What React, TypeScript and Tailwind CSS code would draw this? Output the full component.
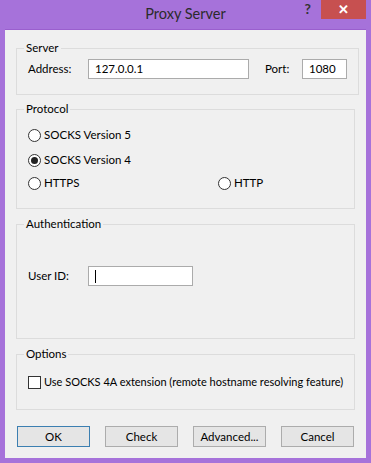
import React from "react";

function Radio({ checked, label }: { checked?: boolean; label: string }) {
  return (
    <div className="flex items-center gap-[3px] h-[16px]">
      <span className="w-[13px] h-[13px] rounded-full border border-[#333] bg-white flex items-center justify-center">
        {checked && <span className="w-[7px] h-[7px] rounded-full bg-[#222]" />}
      </span>
      <span>{label}</span>
    </div>
  );
}

function Btn({ label, focused }: { label: string; focused?: boolean }) {
  return (
    <button
      className={
        "w-[73px] h-[21px] flex items-center justify-center bg-[#e5e5e5] border " +
        (focused ? "border-[#3c7fb1]" : "border-[#acacac]")
      }
    >
      {label}
    </button>
  );
}

export default function App() {
  return (
    <div
      className="w-[371px] h-[463px] bg-[#a672da] flex flex-col text-[11.5px] leading-[16px] text-black"
      style={{ fontFamily: 'Lato, "Open Sans", sans-serif' }}
    >
      <div className="h-[29px] flex items-start relative">
        <div className="flex-1 text-center text-[14.5px] leading-[28px] text-[#2b2b2b]">Proxy Server</div>
        <div className="absolute right-[60px] top-[1px] text-[14px] font-bold text-[#333]">?</div>
        <div className="absolute right-[5px] top-0 w-[45px] h-[19px] bg-[#c75050] flex items-center justify-center text-white text-[13px] font-bold leading-none">
          ✕
        </div>
      </div>
      <div className="mx-[5px] mb-[5px] flex-1 bg-[#f0f0f0] border-t border-[#9a5fce] px-[11px] pt-[10px] flex flex-col">
        <fieldset className="border border-[#dcdcdc] h-[55px] px-[11px]">
          <legend className="px-[2px] -ml-[4px] leading-[16px]">Server</legend>
          <div className="flex items-center mt-[3px]">
            <span className="w-[60px]">Address:</span>
            <div className="w-[161px] h-[20px] border border-[#ababab] bg-white px-[6px] flex items-center">127.0.0.1</div>
            <span className="ml-[16px] w-[37px]">Port:</span>
            <div className="w-[45px] h-[20px] border border-[#ababab] bg-white px-[6px] flex items-center">1080</div>
          </div>
        </fieldset>
        <fieldset className="border border-[#dcdcdc] h-[108px] px-[11px] mt-[6px]">
          <legend className="px-[2px] -ml-[4px] leading-[16px]">Protocol</legend>
          <div className="flex flex-col mt-[10px]">
            <Radio label="SOCKS Version 5" />
            <div className="mt-[9px]">
              <Radio label="SOCKS Version 4" checked />
            </div>
            <div className="flex mt-[7px]">
              <div className="w-[190px]">
                <Radio label="HTTPS" />
              </div>
              <Radio label="HTTP" />
            </div>
          </div>
        </fieldset>
        <fieldset className="border border-[#dcdcdc] h-[123px] px-[11px] mt-[7px]">
          <legend className="px-[2px] -ml-[4px] leading-[16px]">Authentication</legend>
          <div className="flex items-center mt-[34px]">
            <span className="w-[60px]">User ID:</span>
            <div className="w-[105px] h-[20px] border border-[#ababab] bg-white px-[6px] flex items-center">
              <span className="w-[1px] h-[13px] bg-black" />
            </div>
          </div>
        </fieldset>
        <fieldset className="border border-[#dcdcdc] h-[64px] px-[11px] mt-[7px]">
          <legend className="px-[2px] -ml-[4px] leading-[16px]">Options</legend>
          <div className="flex items-center gap-[3px] mt-[12px] h-[16px]">
            <span className="w-[13px] h-[13px] border border-[#333] bg-white" />
            <span className="whitespace-nowrap text-[11px]">Use SOCKS 4A extension (remote hostname resolving feature)</span>
          </div>
        </fieldset>
        <div className="flex justify-between mt-[16px] px-[1px]">
          <Btn label="OK" focused />
          <Btn label="Check" />
          <Btn label="Advanced..." />
          <Btn label="Cancel" />
        </div>
      </div>
    </div>
  );
}
